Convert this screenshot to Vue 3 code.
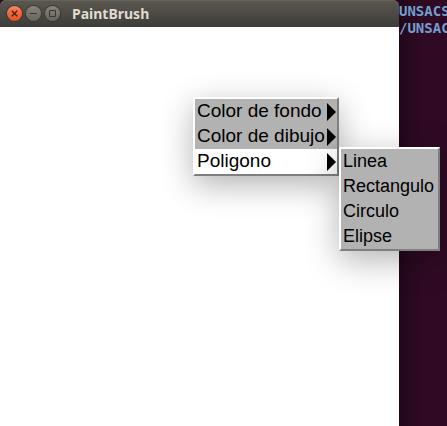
<script setup>
import { ref } from 'vue'

const menu = ['Color de fondo', 'Color de dibujo', 'Poligono']
const shapes = ['Linea', 'Rectangulo', 'Circulo', 'Elipse']
const active = ref('Poligono')
</script>

<template>
  <div class="desktop">
    <main class="window">
      <header class="titlebar">
        <button class="control close" aria-label="Cerrar">
          <svg viewBox="0 0 15 15"><path d="M4.8 4.8l5.4 5.4M10.2 4.8l-5.4 5.4" /></svg>
        </button>
        <button class="control" aria-label="Minimizar">
          <svg viewBox="0 0 15 15"><path d="M4 7.5h7" /></svg>
        </button>
        <button class="control" aria-label="Maximizar">
          <svg viewBox="0 0 15 15"><path d="M4.5 4.5h6v6h-6z" /></svg>
        </button>
        <h1 class="title">PaintBrush</h1>
      </header>
      <section class="canvas"></section>
    </main>
    <aside class="terminal">
      <div>UNSACS</div>
      <div>/UNSAC</div>
    </aside>

    <nav class="menu main-menu">
      <button
        v-for="item in menu"
        :key="item"
        class="item"
        :class="{ active: item === active }"
        @mouseenter="active = item"
      >
        <span>{{ item }}</span>
        <svg class="arrow" viewBox="0 0 9 18"><path d="M0 0L9 9L0 18z" /></svg>
      </button>
    </nav>
    <nav class="menu sub-menu">
      <button v-for="shape in shapes" :key="shape" class="item">{{ shape }}</button>
    </nav>
  </div>
</template>

<style>
body {
  margin: 0;
  background: #300a24;
}
</style>

<style scoped>
.desktop {
  position: relative;
  display: flex;
  min-height: 100vh;
  overflow: hidden;
  background: #300a24;
}

.window {
  flex: 1;
  display: flex;
  flex-direction: column;
  min-width: 0;
}

.titlebar {
  display: flex;
  align-items: center;
  gap: 4px;
  height: 27px;
  padding-left: 7px;
  border-radius: 6px 6px 0 0;
  background: linear-gradient(#5b5850, #3d3c38);
  box-shadow: inset 0 1px #66635a;
}

.control {
  width: 15px;
  height: 15px;
  padding: 0;
  border: 0;
  border-radius: 50%;
  background: linear-gradient(#86847b, #67655f);
  box-shadow: 0 0 0 1px #3b3a35;
}

.control.close {
  background: linear-gradient(#f7835a, #e5501f);
}

.control svg {
  display: block;
  width: 15px;
  height: 15px;
  fill: none;
  stroke: #3a3833;
}

.control.close svg {
  stroke: #4c2010;
  stroke-width: 1.4;
}

.title {
  margin: 0 0 0 8px;
  font: bold 14px/20px "Noto Sans", sans-serif;
  color: #dfdbd2;
}

.canvas {
  flex: 1;
  background: #fff;
}

.terminal {
  width: 48px;
  box-sizing: border-box;
  padding-top: 3px;
  overflow: hidden;
  background: linear-gradient(90deg, #210719, #2a0920 12px, #300a24 28px);
  color: #729fcf;
  font: bold 14px/17px "DejaVu Sans Mono", monospace;
  white-space: nowrap;
}

.menu {
  position: absolute;
  display: flex;
  flex-direction: column;
  box-sizing: border-box;
  border: 2px solid;
  border-color: #fff #7f7f7f #7f7f7f #fff;
  background: #b2b2b2;
  box-shadow: 0 9px 32px rgba(0, 0, 0, 0.3);
}

.main-menu {
  left: 193px;
  top: 97px;
  width: 146px;
}

.sub-menu {
  left: 339px;
  top: 147px;
  width: 101px;
}

.item {
  display: flex;
  align-items: center;
  justify-content: space-between;
  height: 25px;
  padding: 0 1px 2px 2px;
  border: 0;
  background: transparent;
  color: #000;
  font: 19px/23px "Liberation Sans", Arial, sans-serif;
  text-align: left;
  white-space: nowrap;
}

.sub-menu .item {
  padding-bottom: 0;
  font-size: 18px;
}

.item.active {
  background: #fff;
}

.arrow {
  flex: none;
  align-self: flex-end;
  width: 9px;
  height: 18px;
  margin-bottom: 1px;
}
</style>
